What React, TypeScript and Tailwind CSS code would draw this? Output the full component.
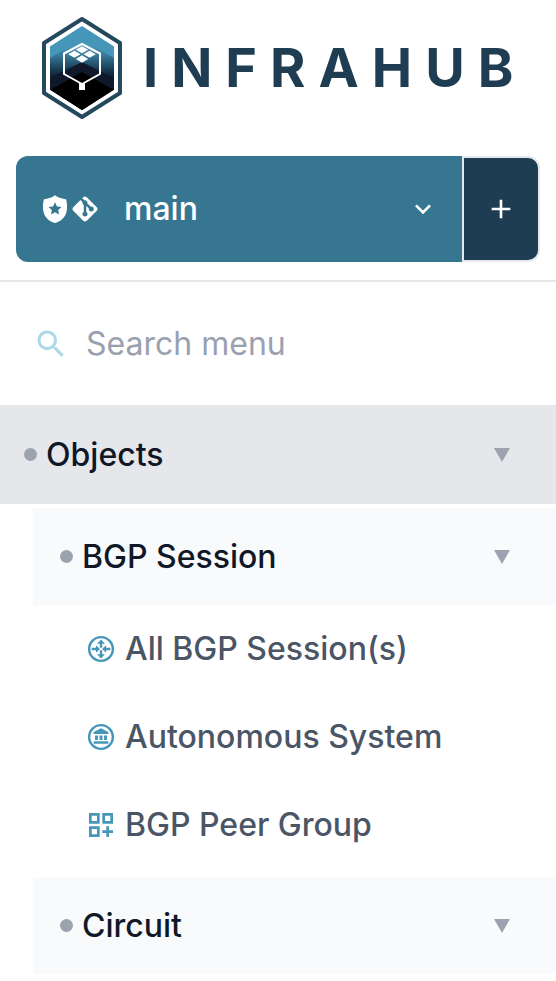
import type { ReactNode } from "react";

function Icon({ className, children }: { className: string; children: ReactNode }) {
  return (
    <svg viewBox="0 0 24 24" fill="currentColor" aria-hidden="true" className={`shrink-0 ${className}`}>
      {children}
    </svg>
  );
}

function LogoMark() {
  return (
    <svg viewBox="0 0 82 104" className="h-[104px] w-[82px] shrink-0" aria-hidden="true">
      <defs>
        <linearGradient id="sky" x1="0" y1="30" x2="0" y2="62" gradientUnits="userSpaceOnUse">
          <stop offset="0" stopColor="#4596b8" />
          <stop offset="0.25" stopColor="#3a7f9f" />
          <stop offset="0.75" stopColor="#183a52" />
          <stop offset="1" stopColor="#101b2d" />
        </linearGradient>
        <clipPath id="inner">
          <path d="M41 10 73 30.500V73.500L41 94 9 73.500V30.500z" />
        </clipPath>
      </defs>
      <path d="M41 3 79 27V77L41 101 3 77V27z" fill="#fff" stroke="#24485c" strokeWidth="4" strokeLinejoin="round" />
      <g clipPath="url(#inner)">
        <path d="M0 0H82V104H0z" fill="#4596b8" />
        <path d="M9 42 41 23 73 42V104H9z" fill="url(#sky)" />
        <path d="M9 62 41 46 73 62V104H9z" fill="#10192c" />
        <path d="M9 74 41 56 73 74V104H9z" fill="#000" />
      </g>
      <path d="M41 28 59 37.500V58L41 68 23 58V37.500z" fill="none" stroke="#fff" strokeWidth="2" strokeLinejoin="round" />
      <path
        d="M41 30.300 47.200 33.800 41 37.300 34.800 33.800zM33.400 34.700 39.600 38.200 33.400 41.700 27.200 38.200zM48.600 34.700 54.800 38.200 48.600 41.700 42.400 38.200zM41 39.200 47.200 42.900 41 46.800 34.800 42.900z"
        fill="#fff"
      />
      <path d="M38 67h6v7h-6z" fill="#fff" />
    </svg>
  );
}

function Triangle() {
  return (
    <svg viewBox="0 0 16 14" className="h-3.5 w-4 shrink-0 fill-[#9ca3af]" aria-hidden="true">
      <path d="M0 0H16L8 14z" />
    </svg>
  );
}

function GroupLabel({ children }: { children: ReactNode }) {
  return (
    <>
      <span className="size-[13px] shrink-0 rounded-full bg-[#9ca3af]" />
      <span className="ml-[9px] flex-1">{children}</span>
      <Triangle />
    </>
  );
}

function SubGroup({ children }: { children: ReactNode }) {
  return (
    <button type="button" className="ml-[33px] flex h-[97px] items-center bg-[#f9fafc] pr-[46px] pl-[27px] text-left text-gray-900">
      <GroupLabel>{children}</GroupLabel>
    </button>
  );
}

function MenuLink({ icon, children }: { icon: ReactNode; children: ReactNode }) {
  return (
    <a href="#" className="flex h-[88px] items-center gap-2 pl-[85px] text-gray-600">
      <Icon className="size-8 text-[#4596b8]">{icon}</Icon>
      {children}
    </a>
  );
}

const routerIcon = (
  <>
    <circle cx="12" cy="12" r="8.900" fill="none" stroke="currentColor" strokeWidth="1.800" />
    <path d="M12 4.800 9 8H11.100v3h1.800V8H15zM12 19.200 15 16h-2.100v-3h-1.800v3H9zM11.200 12 8.200 9.200V11H5v2h3.200v1.800zM12.800 12l3 2.800V13H19v-2h-3.200V9.200z" />
  </>
);

const bankIcon = (
  <>
    <circle cx="12" cy="12" r="8.900" fill="none" stroke="currentColor" strokeWidth="1.800" />
    <path d="M12 5.500 6.500 8.300V9.800h11V8.300zM7.500 10.800h2.200v3.400H7.500zM10.900 10.800h2.200v3.400h-2.200zM14.300 10.800h2.200v3.400h-2.200zM6.500 15.200h11V17h-11z" />
  </>
);

const gridPlusIcon = (
  <path
    fillRule="evenodd"
    d="M3 3h8v8H3zM5 5v4h4V5zM13 3h8v8h-8zM15 5v4h4V5zM3 13h8v8H3zM5 15v4h4v-4zM16 13h2v3h3v2h-3v3h-2v-3h-3v-2h3z"
  />
);

export default function App() {
  return (
    <div className="w-full bg-white pb-2 font-['Inter',sans-serif] text-[32px] leading-10 font-medium">
      <header className="border-b-2 border-gray-200 px-4 pt-4 pb-[18px]">
        <div className="flex items-center pl-[25px]">
          <LogoMark />
          <span className="ml-5 text-[54px] leading-[64px] font-bold tracking-[13px] text-[#1e3d52]">INFRAHUB</span>
        </div>
        <div className="mt-9 flex h-[106px]">
          <button type="button" className="flex flex-1 items-center rounded-l-xl bg-[#367691] pr-[23px] pl-6 text-left text-white">
            <Icon className="size-[30px]">
              <path
                fillRule="evenodd"
                d="M12 1C9.500 3 6 4 3.200 4.200 2.400 6.500 2.200 9 2.500 12.500 3 18 7 21.800 12 23.200 17 21.800 21 18 21.500 12.500 21.800 9 21.600 6.500 20.800 4.200 18 4 14.500 3 12 1zM12 6.500l1.550 3.400 3.700.400-2.750 2.500.75 3.650L12 14.600l-3.250 1.850.75-3.650-2.750-2.500 3.700-.400z"
              />
            </Icon>
            <Icon className="size-[30px]">
              <path d="M2.600 10.590 8.380 4.800l1.690 1.700c-.240.850.150 1.780.930 2.230v5.540c-.600.340-1 .990-1 1.730a2 2 0 0 0 4 0c0-.740-.400-1.390-1-1.730V9.410l2.070 2.090c-.070.150-.070.320-.070.500a2 2 0 1 0 2-2c-.180 0-.350 0-.500.070L13.930 7.500a1.980 1.980 0 0 0-1.150-2.340c-.430-.160-.880-.200-1.280-.090L9.800 3.380l.790-.780c.780-.790 2.040-.790 2.820 0l7.990 7.990c.790.780.790 2.040 0 2.820l-7.990 7.990c-.780.790-2.040.790-2.820 0L2.600 13.410c-.790-.780-.790-2.040 0-2.820z" />
            </Icon>
            <span className="ml-6 flex-1">main</span>
            <Icon className="size-8">
              <path d="M7.410 8.580 12 13.170l4.590-4.590L18 10l-6 6-6-6z" />
            </Icon>
          </button>
          <button
            type="button"
            aria-label="Add"
            className="flex w-[78px] items-center justify-center rounded-r-xl border-2 border-gray-200 bg-[#1e3d52] text-white"
          >
            <Icon className="size-8">
              <path d="M19 13h-6v6h-2v-6H5v-2h6V5h2v6h6z" />
            </Icon>
          </button>
        </div>
      </header>

      <label className="flex h-[123px] items-center gap-[17px] pl-[33px]">
        <Icon className="size-9 text-[#add8e6]">
          <path
            fillRule="evenodd"
            d="M9.500 3A6.500 6.500 0 0 1 16 9.500c0 1.610-.590 3.090-1.560 4.230l.270.270h.790l5 5-1.500 1.500-5-5v-.790l-.270-.270A6.500 6.500 0 1 1 9.500 3zm0 2a4.500 4.500 0 1 0 0 9 4.500 4.500 0 0 0 0-9z"
          />
        </Icon>
        <input
          type="text"
          aria-label="Search menu"
          placeholder="Search menu"
          className="min-w-0 flex-1 bg-transparent font-normal outline-none placeholder:text-gray-400"
        />
      </label>

      <nav className="flex flex-col">
        <button type="button" className="flex h-[99px] items-center bg-gray-200 pr-[46px] pl-6 text-left text-gray-900">
          <GroupLabel>Objects</GroupLabel>
        </button>
        <div className="mt-1 flex flex-col">
          <SubGroup>BGP Session</SubGroup>
          <div className="mb-2 flex flex-col">
            <MenuLink icon={routerIcon}>All BGP Session(s)</MenuLink>
            <MenuLink icon={bankIcon}>Autonomous System</MenuLink>
            <MenuLink icon={gridPlusIcon}>BGP Peer Group</MenuLink>
          </div>
          <SubGroup>Circuit</SubGroup>
        </div>
      </nav>
    </div>
  );
}
